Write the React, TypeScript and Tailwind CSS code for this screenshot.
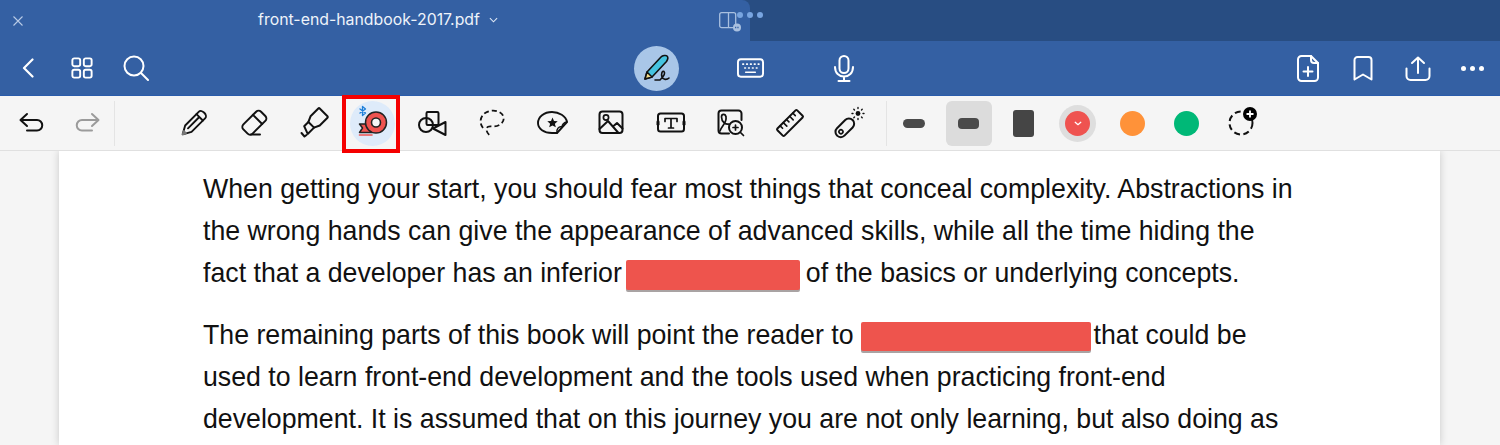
import React from "react";

const S = ({ children, className = "" }: { children: React.ReactNode; className?: string }) => (
  <svg viewBox="0 0 36 36" className={`w-9 h-9 ${className}`} fill="none" stroke="#111" strokeWidth="2" strokeLinecap="round" strokeLinejoin="round">
    {children}
  </svg>
);

const Tool = ({ children }: { children: React.ReactNode }) => (
  <div className="w-[59.55px] h-full flex items-center justify-center shrink-0">{children}</div>
);

const Swatch = ({ children }: { children: React.ReactNode }) => (
  <div className="w-[54.5px] h-full flex items-center justify-center shrink-0">{children}</div>
);

const Undo = ({ color = "#111", flip = false }: { color?: string; flip?: boolean }) => (
  <S>
    <g stroke={color} transform={flip ? "matrix(-1 0 0 1 36 0)" : undefined}>
      <path d="M13 9 L6.5 15 L13 21 M7 15 H23 a5 5 0 0 1 0 10.5 H13" />
    </g>
  </S>
);

function Toolbar() {
  return (
    <div className="relative z-10 h-[55px] bg-[#f5f5f5] border-b border-[#e0e0e0] flex items-center pl-[4.5px]">
      <div className="w-[55px] h-full flex items-center justify-center shrink-0"><Undo /></div>
      <div className="w-[54px] h-full flex items-center justify-center shrink-0"><Undo color="#9b9b9b" flip /></div>
      <div className="w-px h-[45px] bg-[#e4e4e4] shrink-0" />
      <div className="w-[50px] shrink-0" />
      <Tool>
        <S>
          <g transform="rotate(45 18 18)" strokeWidth="1.9">
            <path d="M13.5 6.5 a4.5 3 0 0 1 9 0 V26 L18 34 L13.5 26 Z" />
            <path d="M13.5 10 H22.5 M17.5 10 V26" />
            <path d="M16.5 31 L18 34 L19.5 31 Z" fill="#777" stroke="#777" />
          </g>
        </S>
      </Tool>
      <Tool>
        <S>
          <g transform="rotate(45 18 18)">
            <rect x="11.5" y="5" width="13" height="25" rx="3.5" />
            <path d="M11.5 13 H24.5" />
          </g>
          <path d="M15 29.5 H24" />
        </S>
      </Tool>
      <Tool>
        <S>
          <g transform="rotate(45 18 18)">
            <path d="M11.5 4 a1 1 0 0 1 1 -1 H23.5 a1 1 0 0 1 1 1 V15 L22 20.5 H14 L11.5 15 Z" />
            <path d="M14 20.5 V26.5 L22 29.5 V20.5" />
          </g>
          <path d="M6.5 28 L9.5 31.5 L11.5 30" />
        </S>
      </Tool>
      <div className="relative w-[59.55px] h-full flex items-center justify-center shrink-0">
        <div className="absolute left-[-1px] top-[-1px] w-[58px] h-[58px] border-4 border-[#f50000]" />
        <div className="w-[45px] h-[45px] rounded-full bg-[#deebfa] flex items-center justify-center">
          <S>
            <path d="M14 19 L4.5 19 L7.5 23 L4.5 27.5 L17 27.5 Z" fill="#ef5350" stroke="#222" strokeWidth="1.5" />
            <circle cx="21" cy="17.5" r="10.5" fill="#ef5350" stroke="#222" strokeWidth="1.5" />
            <circle cx="21" cy="17.5" r="4.5" fill="#f5f5f5" stroke="#222" strokeWidth="1.6" />
            <path d="M4.5 30 H17" stroke="#ef5350" strokeWidth="1.6" />
            <path d="M5 4 L10.5 8 L7.5 10.5 V1.5 L10.5 4 L5 8" stroke="#1e7fd8" strokeWidth="1.3" />
          </S>
        </div>
      </div>
      <Tool>
        <S>
          <rect x="12.5" y="7" width="12" height="13" rx="1.2" />
          <circle cx="12" cy="20" r="7" />
          <path d="M19 23.5 L31.5 17 V30 Z" />
        </S>
      </Tool>
      <Tool>
        <S>
          <path d="M9 23 C5 18 6 11 12 7.5 C18 4 28 5.5 29.5 12 C31 18 24 22 18 21.5 C14 21 12 22 12.5 25 C13 28 15 30 17.5 31.5" strokeWidth="1.8" strokeDasharray="5 3" strokeLinecap="butt" />
        </S>
      </Tool>
      <Tool>
        <S>
          <path d="M33 17 C32 11 25 7 18 7 C10 7 4 12 4 18 C4 24 10 28 18 28 H23 L33 17 Z" strokeWidth="1.9" />
          <path d="M23 28 C22 24 25 21 28 22 C28 20 30 17 33 17" strokeWidth="1.5" />
          <path d="M18.5 12.5 L20 16 L23.7 16.3 L20.9 18.7 L21.8 22.3 L18.5 20.4 L15.2 22.3 L16.1 18.7 L13.3 16.3 L17 16 Z" fill="#111" stroke="none" />
        </S>
      </Tool>
      <Tool>
        <S>
          <rect x="6.5" y="6.5" width="23" height="21.5" rx="3" />
          <circle cx="13" cy="12.5" r="2.6" strokeWidth="1.7" />
          <path d="M6.5 24 L15 16 L25.5 28 M20 21.5 L24 18 L29.5 23.5" />
        </S>
      </Tool>
      <Tool>
        <S>
          <rect x="5" y="8.5" width="26" height="18" rx="2.5" />
          <path d="M12 16.5 V13.5 H24 V16.5 M18 13.5 V23 M15.5 23 H20.5" strokeWidth="1.7" />
          <rect x="3.5" y="15.5" width="3" height="5" rx="1.2" fill="#111" stroke="none" />
          <rect x="29.5" y="15.5" width="3" height="5" rx="1.2" fill="#111" stroke="none" />
        </S>
      </Tool>
      <Tool>
        <S>
          <path d="M17 28.5 H9.5 a3 3 0 0 1 -3 -3 V8.5 a3 3 0 0 1 3 -3 H26.5 a3 3 0 0 1 3 3 V15" />
          <path d="M8 26 C10 20 15 18 14 12 C13.5 8.5 9.5 8.5 9.5 12 C9.5 17 14 20 17 19" strokeWidth="1.7" />
          <circle cx="23.5" cy="22.5" r="6.5" />
          <path d="M21 22.5 H26 M23.5 20 V25 M28.5 27.5 L31.5 30.5" strokeWidth="1.7" />
        </S>
      </Tool>
      <Tool>
        <S>
          <g transform="rotate(-45 18 18)">
            <rect x="4" y="13" width="28" height="10" rx="1.2" />
            <path d="M9 13 V16.5 M13.5 13 V18 M18 13 V16.5 M22.5 13 V18 M27 13 V16.5" strokeWidth="1.6" />
          </g>
        </S>
      </Tool>
      <Tool>
        <S>
          <g transform="rotate(-45 14 23)">
            <rect x="3" y="17.5" width="22" height="10.5" rx="5.2" />
            <circle cx="8.5" cy="22.8" r="2" strokeWidth="1.6" />
          </g>
          <circle cx="27" cy="8.5" r="2.4" fill="#111" stroke="none" />
          <path d="M27 2.5 V3.5 M27 13.5 V14.5 M21 8.5 H22 M32 8.5 H33 M22.8 4.3 L23.5 5 M30.5 12 L31.2 12.7 M31.2 4.3 L30.5 5 M23.5 12 L22.8 12.7" strokeWidth="1.4" />
        </S>
      </Tool>
      <div className="w-[7px] shrink-0" />
      <div className="w-px h-[45px] bg-[#e4e4e4] shrink-0" />
      <Swatch><div className="w-[22px] h-[9px] rounded-full bg-[#4a4a4a]" /></Swatch>
      <Swatch>
        <div className="w-[46px] h-[45px] rounded-md bg-[#dcdcdc] flex items-center justify-center">
          <div className="w-[21px] h-[11px] rounded-[4px] bg-[#4a4a4a]" />
        </div>
      </Swatch>
      <Swatch><div className="w-[21px] h-[27px] rounded-[3px] bg-[#454545]" /></Swatch>
      <Swatch>
        <div className="w-[37px] h-[37px] rounded-full bg-[#dedede] flex items-center justify-center">
          <div className="w-[25px] h-[25px] rounded-full bg-[#ef5350] flex items-center justify-center">
            <svg viewBox="0 0 10 6" className="w-[8px] h-[5px]" fill="none" stroke="#fff" strokeWidth="1.6" strokeLinecap="round" strokeLinejoin="round"><path d="M1.5 1.5 L5 4.5 L8.5 1.5" /></svg>
          </div>
        </div>
      </Swatch>
      <Swatch><div className="w-[25px] h-[25px] rounded-full bg-[#ff9239]" /></Swatch>
      <Swatch><div className="w-[25px] h-[25px] rounded-full bg-[#00b877]" /></Swatch>
      <Swatch>
        <S>
          <circle cx="18" cy="18" r="11.5" strokeDasharray="6 3.5" strokeLinecap="butt" />
          <circle cx="27" cy="9" r="7" fill="#000" stroke="none" />
          <path d="M27 5.5 V12.5 M23.5 9 H30.5" stroke="#fff" strokeWidth="1.8" strokeLinecap="butt" />
        </S>
      </Swatch>
    </div>
  );
}

function NavBar() {
  const w = { fill: "none", stroke: "#fff", strokeWidth: 2, strokeLinecap: "round", strokeLinejoin: "round" } as const;
  return (
    <div className="relative h-[54px] bg-[#3460a3] flex items-center justify-between">
      <div className="flex items-center pl-[22px]">
        <svg viewBox="0 0 12 20" className="w-[12px] h-[20px]" {...w} strokeWidth={2.2}><path d="M10.5 1.5 L2 10 L10.5 18.5" /></svg>
        <svg viewBox="0 0 24 24" className="w-[22px] h-[22px] ml-[37px]" {...w} strokeWidth={2.1}>
          <rect x="1.5" y="1.5" width="8.5" height="8.5" rx="2" />
          <rect x="14" y="1.5" width="8.5" height="8.5" rx="2" />
          <rect x="1.5" y="14" width="8.5" height="8.5" rx="2" />
          <rect x="14" y="14" width="8.5" height="8.5" rx="2" />
        </svg>
        <svg viewBox="0 0 26 26" className="w-[26px] h-[26px] ml-[30px]" {...w}>
          <circle cx="11" cy="11" r="9.5" />
          <path d="M18 18 L25 25" />
        </svg>
      </div>
      <div className="absolute left-[634px] top-0 h-full flex items-center">
        <div className="w-[45px] h-[45px] rounded-full bg-[#a9c6e8] flex items-center justify-center">
          <svg viewBox="0 0 30 30" className="w-[30px] h-[30px]" fill="none" stroke="#111" strokeWidth="1.6" strokeLinecap="round" strokeLinejoin="round">
            <path d="M3 26 L5 19 L19 4 C20.5 2.5 24 2 25 3 C26.5 4.5 25.5 7 24.5 8.5 L10 24 Z" fill="#45c3e0" />
            <path d="M3 26 L5 19 L10 24 Z" fill="#f4dd8a" />
            <path d="M13 27 H18 C21 24 23.5 20 22 18.5 C20 17.5 19 21 20 24 C21 27 25 27 27 25" stroke="#111" />
          </svg>
        </div>
        <svg viewBox="0 0 28 20" className="w-[27px] h-[20px] ml-[58px]" {...w}>
          <rect x="1" y="1" width="26" height="18" rx="3" />
          <path d="M6 6 H6.8 M10 6 H10.8 M14 6 H14.8 M18 6 H18.8 M22 6 H22.8 M8 10 H8.8 M12 10 H12.8 M16 10 H16.8 M20 10 H20.8 M9 14.5 H19" strokeWidth="1.6" />
        </svg>
        <svg viewBox="0 0 20 27" className="w-[20px] h-[27px] ml-[70px]" {...w}>
          <rect x="5.5" y="1" width="9" height="17" rx="4.5" />
          <path d="M1 12 C1 18 5 21.5 10 21.5 C15 21.5 19 18 19 12 M10 21.5 V26 M4.5 26 H15.5" />
        </svg>
      </div>
      <div className="flex items-center pr-[16px]">
        <svg viewBox="0 0 22 27" className="w-[22px] h-[27px]" {...w}>
          <path d="M14 1 H4.5 a3.5 3.5 0 0 0 -3.5 3.5 V22.5 a3.5 3.5 0 0 0 3.5 3.5 H17.5 a3.5 3.5 0 0 0 3.5 -3.5 V8 Z" />
          <path d="M14 1 V5 a3 3 0 0 0 3 3 H21 M11 12 V21 M6.5 16.5 H15.5" />
        </svg>
        <svg viewBox="0 0 20 25" className="w-[20px] h-[25px] ml-[34px]" {...w}>
          <path d="M1.5 23.5 V4 a3 3 0 0 1 3 -3 H15.5 a3 3 0 0 1 3 3 V23.5 L10 18.5 Z" />
        </svg>
        <svg viewBox="0 0 26 25" className="w-[26px] h-[25px] ml-[32px]" {...w}>
          <path d="M1.5 12.5 V20 a4 4 0 0 0 4 4 H20.5 a4 4 0 0 0 4 -4 V12.5 M13 17 V1.5 M7 7 L13 1.5 L19 7" />
        </svg>
        <div className="flex gap-[4px] ml-[30px]">
          <div className="w-[5px] h-[5px] rounded-full bg-white" />
          <div className="w-[5px] h-[5px] rounded-full bg-white" />
          <div className="w-[5px] h-[5px] rounded-full bg-white" />
        </div>
      </div>
    </div>
  );
}

function TitleBar() {
  return (
    <div className="h-[41px] bg-[#284d82] flex">
      <div className="relative w-[750px] h-full bg-[#3460a3] rounded-tr-lg flex items-center justify-center pb-[1px] pl-[6px]">
        <svg viewBox="0 0 10 10" className="absolute left-[13px] top-[16px] w-[10px] h-[10px]" fill="none" stroke="#b9cbe6" strokeWidth="1.1"><path d="M0.5 0.5 L9.5 9.5 M9.5 0.5 L0.5 9.5" /></svg>
        <span className="text-[15.85px] text-[#eef3fa] font-['Inter',sans-serif]">front-end-handbook-2017.pdf</span>
        <svg viewBox="0 0 10 6" className="ml-[9px] w-[9px] h-[6px]" fill="none" stroke="#dfe8f5" strokeWidth="1.2"><path d="M1 1 L5 5 L9 1" /></svg>
        <div className="absolute left-[719px] top-[11px]">
          <svg viewBox="0 0 24 22" className="w-[24px] h-[22px]" fill="none" stroke="#a9c0e0" strokeWidth="1.3">
            <rect x="0.7" y="1.7" width="16" height="15" rx="2" />
            <path d="M9.5 1.7 V16.7" />
            <circle cx="18" cy="16.5" r="4" fill="#a9c0e0" stroke="none" />
            <path d="M16 16.5 H20" stroke="#3460a3" strokeDasharray="1 0.7" />
          </svg>
        </div>
        <div className="absolute left-[737px] top-[12px] flex gap-[4px] z-10">
          <div className="w-[6px] h-[6px] rounded-full bg-[#79a5e0]" />
          <div className="w-[6px] h-[6px] rounded-full bg-[#79a5e0]" />
          <div className="w-[6px] h-[6px] rounded-full bg-[#79a5e0]" />
        </div>
      </div>
    </div>
  );
}

const Redact = ({ className }: { className: string }) => (
  <span className={`inline-block align-middle bg-[#ee544d] rounded-[2px] shadow-[0_2px_0_#a9a3a3] ${className}`} />
);

export default function App() {
  return (
    <div className="w-[1500px] h-[445px] overflow-hidden bg-[#f5f5f5] flex flex-col">
      <TitleBar />
      <NavBar />
      <div className="h-px bg-[#2a5cab]" />
      <Toolbar />
      <div className="ml-[59px] mr-[60px] flex-1 bg-white shadow-[0_0_8px_rgba(0,0,0,0.18)] pl-[144px] pt-[17px] font-['Liberation_Sans',sans-serif] text-[26.72px] leading-[42px] text-[#111] whitespace-nowrap">
        <div className="mb-[20px]">
          <div>When getting your start, you should fear most things that conceal complexity. Abstractions in</div>
          <div>the wrong hands can give the appearance of advanced skills, while all the time hiding the</div>
          <div>fact that a developer has an inferior<Redact className="w-[174px] h-[30px] ml-[4px] mr-[6px]" />of the basics or underlying concepts.</div>
        </div>
        <div>
          <div>The remaining parts of this book will point the reader to<Redact className="w-[230px] h-[29px] ml-[7px] mr-[3px]" />that could be</div>
          <div>used to learn front-end development and the tools used when practicing front-end</div>
          <div>development. It is assumed that on this journey you are not only learning, but also doing as</div>
        </div>
      </div>
    </div>
  );
}
